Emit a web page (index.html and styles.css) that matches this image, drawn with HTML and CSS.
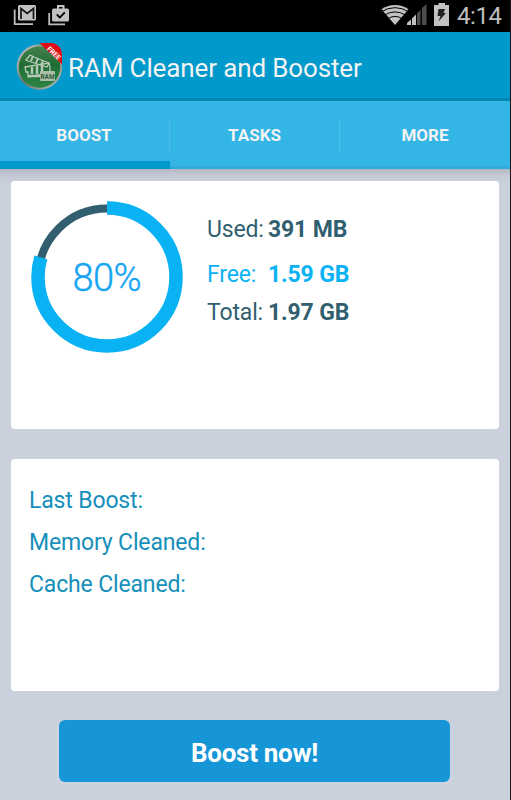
FILE: index.html
```html
<!doctype html>
<html>

<head>
	<meta charset="UTF-8">
	<title>RAM Cleaner and Booster</title>
	<link rel="stylesheet" href="styles.css">
</head>

<body>
	<div class="screen">
		<div class="status">
			<svg class="status_left" width="80" height="32" viewBox="0 0 80 32">
				<!-- mail -->
				<path d="M14.7 9.5V24.2H33" fill="none" stroke="#bdbdbd" stroke-width="1.8" />
				<rect x="18" y="5" width="18" height="15.500" rx="1.500" fill="#c2c2c2" />
				<path d="M21 19V8.500L27.200 13.500L33.500 8.500V19" fill="none" stroke="#111" stroke-width="1.700" />
				<!-- shop bag -->
				<path d="M49.200 13V24.300H65" fill="none" stroke="#bdbdbd" stroke-width="1.800" />
				<path d="M58 9V6H63.500V9" fill="none" stroke="#c2c2c2" stroke-width="2" />
				<rect x="52" y="8.500" width="17" height="13" rx="1.500" fill="#c2c2c2" />
				<path d="M56.800 14.500L59.800 17.500L64.800 12.300" fill="none" stroke="#000" stroke-width="1.800" />
			</svg>
			<svg class="status_right" width="72" height="32" viewBox="380 0 72 32">
				<!-- wifi -->
				<path d="M381.500 9.200Q395 .8 408.500 9.200L395 25Z" fill="#c2c2c2" />
				<path d="M381 11.800Q395 3.500 409 11.800M384 15.300Q395 8.500 406 15.300M387.500 18.800Q395 14 402.500 18.800" fill="none" stroke="#000" stroke-width="1" />
				<!-- signal -->
				<path d="M407 25V23L411 19.500V25Z M412 25V18.500L416 14.500V25Z" fill="#c2c2c2" />
				<path d="M417 25V13.500L420.500 9.500V25Z M422 25V8L426.500 4V25Z" fill="#4d4d4d" />
				<!-- battery -->
				<path d="M438.500 3H445V5H449V26H434V5H438.500Z" fill="#c2c2c2" />
				<path d="M438.500 9H445L443.500 13H446L438.500 21.500L440.500 16H437.500Z" fill="#222" />
			</svg>
			<span class="clock">4:14</span>
		</div>
		<div class="header">
			<svg class="logo" width="48" height="48" viewBox="0 0 48 48">
				<defs>
					<linearGradient id="rim" x1="0" y1="0" x2="1" y2="1">
						<stop offset="0" stop-color="#d0d4d2" />
						<stop offset=".5" stop-color="#68776e" />
						<stop offset="1" stop-color="#c4c4c4" />
					</linearGradient>
					<linearGradient id="ball" x1="0" y1="0" x2="0" y2="1">
						<stop offset="0" stop-color="#468250" />
						<stop offset=".45" stop-color="#206d34" />
						<stop offset="1" stop-color="#2c8543" />
					</linearGradient>
				</defs>
				<circle cx="23.500" cy="24" r="22.800" fill="url(#rim)" />
				<circle cx="23.500" cy="24" r="20.700" fill="url(#ball)" />
				<!-- tilted memory sticks -->
				<g fill="none" stroke="#b9c9b9" stroke-width="1.300">
					<path d="M10 17L14 12L18 14L33 20L31 24L12 18Z" />
					<path d="M17 13L15 18M22 15L20 20M27 18L25 22" stroke-width="2" />
					<path d="M9 24L33 20L34 24V30L12 34V29H10Z" />
					<path d="M16 24V31M21 23V31M26 22V29" stroke-width="2.400" />
					<path d="M12 33H24" stroke-width="2.400" />
				</g>
				<rect x="24" y="28" width="15" height="10" rx="1" fill="#a9bfaa" />
				<text x="24.500" y="36" class="logo_ram" textLength="14" lengthAdjust="spacingAndGlyphs">RAM</text>
				<path d="M23.500 0H37Q45.500 2.500 46 11V21.500Z" fill="#e00d16" />
				<text x="30.500" y="6.500" class="logo_free" transform="rotate(43 30.5 6.5)" textLength="16" lengthAdjust="spacingAndGlyphs">FREE</text>
			</svg>
			<span class="title">RAM Cleaner and Booster</span>
		</div>
		<div class="tabs">
			<div class="tab active">BOOST</div>
			<div class="tab">TASKS</div>
			<div class="tab">MORE</div>
		</div>
		<div class="content">
			<div class="card memory">
				<svg class="ring" width="152" height="152" viewBox="0 0 152 152">
					<circle cx="76" cy="76" r="68.500" fill="none" stroke="#315f70" stroke-width="8" />
					<circle cx="76" cy="76" r="69" fill="none" stroke="#08b2f3" stroke-width="13.500" pathLength="100" stroke-dasharray="79.600 100" transform="rotate(-90 76 76)" />
					<text x="76" y="89.500" class="percent" text-anchor="middle" textLength="69">80%</text>
				</svg>
				<div class="info">
					<div class="row used"><span>Used:</span><b>391 MB</b></div>
					<div class="row free"><span>Free:</span><b>1.59 GB</b></div>
					<div class="row total"><span>Total:</span><b>1.97 GB</b></div>
				</div>
			</div>
			<div class="card history">
				<p>Last Boost:</p>
				<p>Memory Cleaned:</p>
				<p>Cache Cleaned:</p>
			</div>
			<button class="boost">Boost now!</button>
		</div>
	</div>
</body>

</html>
```
FILE: styles.css
```css
* {
	box-sizing: border-box;
}

body {
	margin: 0;
	background: #171b20;
	font-family: Roboto, "Liberation Sans", sans-serif;
}

.screen {
	width: 510px;
	height: 800px;
	overflow: hidden;
	background: #cad0dc;
}

.status {
	display: flex;
	height: 32px;
	background: #000;
}

.status_right {
	margin-left: 300px;
}

.clock {
	margin-left: 5px;
	color: #bebebe;
	font-size: 24px;
	letter-spacing: -0.4px;
	line-height: 32px;
	white-space: nowrap;
}

.header {
	display: flex;
	align-items: center;
	height: 69px;
	padding: 3px 0 0 16px;
	background: #0099cc;
	border-bottom: 3px solid #0087b4;
}

.logo {
	flex: none;
}

.logo_ram {
	font-size: 8px;
	font-weight: bold;
	fill: #315c3b;
}

.logo_free {
	font-size: 7px;
	font-weight: bold;
	fill: #fff;
}

.title {
	margin-left: 4px;
	padding-top: 2px;
	color: #f3f3f3;
	font-size: 26px;
	letter-spacing: -0.13px;
	white-space: nowrap;
}

.tabs {
	display: flex;
	height: 68px;
	background: #33b5e5;
}

.tab {
	width: 170px;
	padding: 1px 1px 0 0;
	color: #f3f3f3;
	font-size: 17px;
	font-weight: bold;
	line-height: 67px;
	text-align: center;
	border-bottom: 3px solid #30abd9;
	background: linear-gradient(#4bbde8, #4bbde8) right 17px / 1px 34px no-repeat;
}

.tab:last-child {
	padding-right: 0;
	background: none;
}

.tab.active {
	padding-right: 2px;
	border-bottom: 8px solid #0099cc;
}

.content {
	height: 631px;
	padding: 12px 11px 0;
	background: linear-gradient(#b2b7c4, #c3c8d4 6px, #cad0dc 14px);
}

.card {
	width: 488px;
	background: #fff;
	border-radius: 4px;
	box-shadow: 0 0 1px #e5e8ef;
}

.memory {
	display: flex;
	height: 248px;
	padding: 20px;
}

.ring {
	flex: none;
}

.percent {
	font-size: 38px;
	font-weight: 300;
	fill: #16a4f4;
	stroke: #16a4f4;
	stroke-width: .4px;
}

.info {
	padding: 14px 0 0 24px;
}

.row {
	display: flex;
	height: 30px;
	color: #315f70;
	font-size: 23px;
	letter-spacing: -0.15px;
	line-height: 30px;
	white-space: nowrap;
}

.row span {
	width: 61px;
}

.row b {
	font-weight: bold;
}

.free {
	margin: 15px 0 8px;
	color: #08b2f3;
}

.history {
	height: 232px;
	margin-top: 30px;
	padding: 21px 18px;
}

.history p {
	margin: 0;
	color: #158fba;
	font-size: 23px;
	letter-spacing: -0.15px;
	line-height: 42px;
}

.boost {
	display: block;
	width: 391px;
	height: 62px;
	margin: 29px 0 0 48px;
	padding: 4px 0 0;
	color: #fff;
	font-family: inherit;
	font-size: 26px;
	font-weight: bold;
	letter-spacing: -0.3px;
	border: none;
	border-radius: 6px;
	background: #1696d7;
	box-shadow: 0 1px 2px 2px #cfd4e2;
}
```
